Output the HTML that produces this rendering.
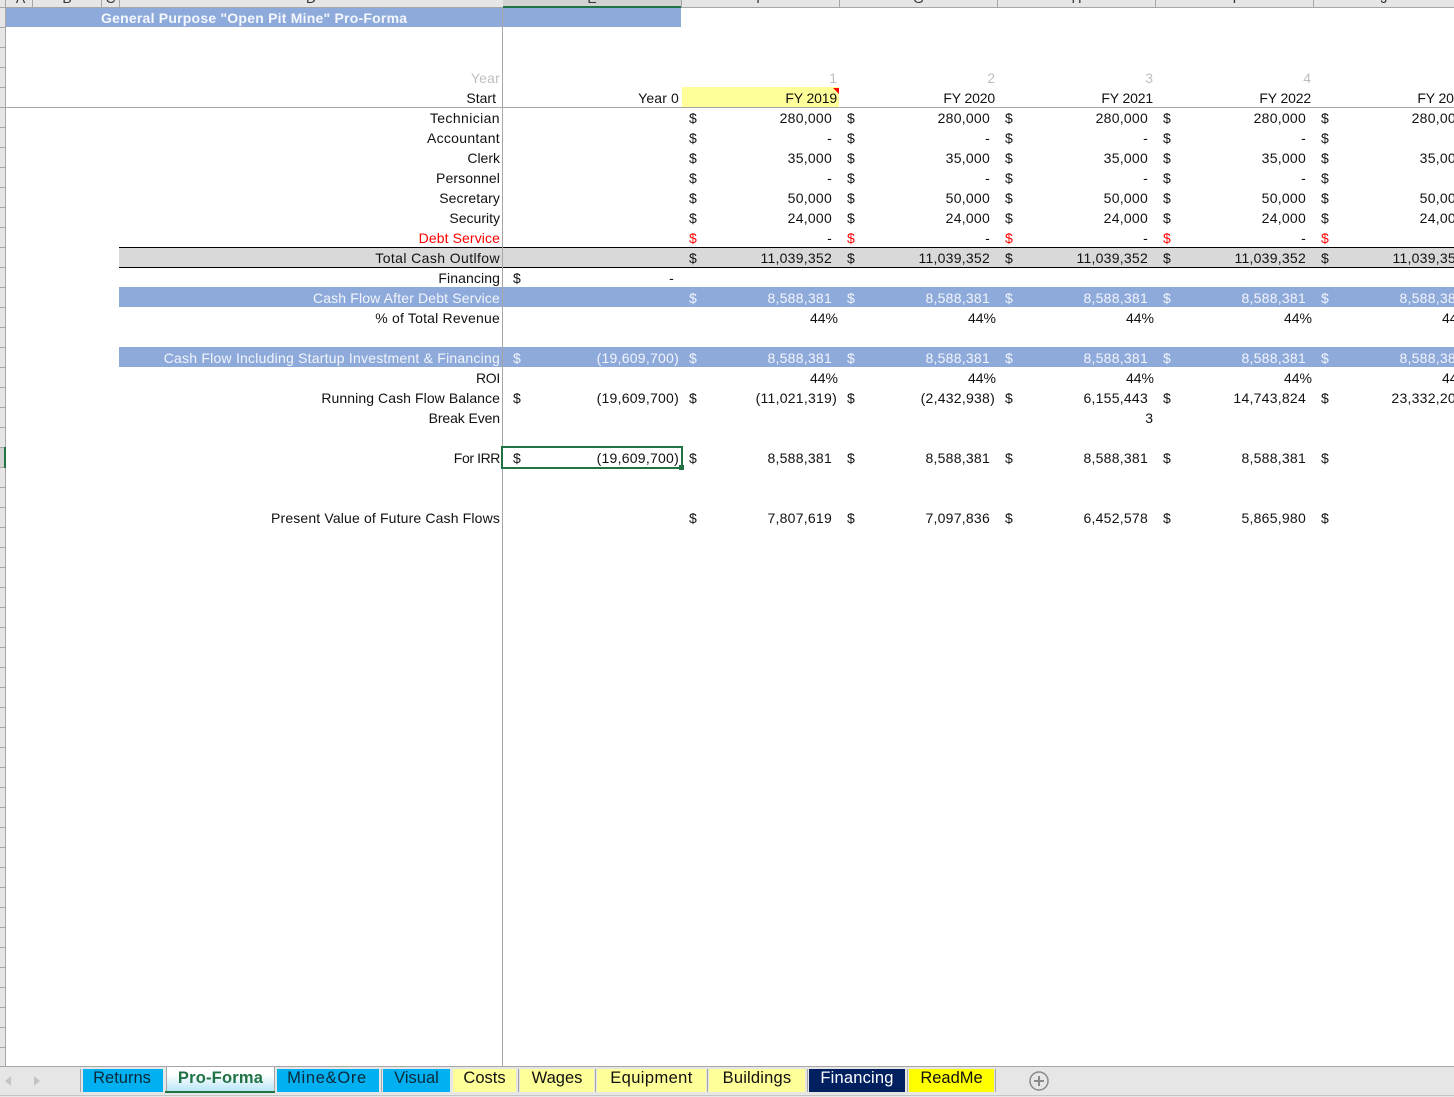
<!DOCTYPE html>
<html lang="en"><head><meta charset="utf-8"><title>Pro-Forma</title>
<style>
html,body{margin:0;padding:0;background:#fff}
#p{position:relative;width:1454px;height:1097px;overflow:hidden;background:#fff;font:14px/20px "Liberation Sans",sans-serif;color:#111}
#p div{position:absolute}
.r{left:0;width:1454px;height:20px}
.r span{position:absolute;top:0;white-space:nowrap}
.l,.z,.n1,.n2,.n3,.n4,.n5,.p1,.p2,.p3,.p4,.p5,.x{text-align:right;width:300px}
.l{left:100px;width:400px}.z{left:379px}.x{left:374px}
.z,.n1,.n2,.n3,.n4,.n5{letter-spacing:.25px}
.n1{left:532px}.n2{left:690px}.n3{left:848px}.n4{left:1006px}.n5{left:1164px}
.p1{left:538px}.p2{left:696px}.p3{left:854px}.p4{left:1012px}.p5{left:1170px}
.d0{left:513px}.d1{left:689px}.d2{left:847px}.d3{left:1005px}.d4{left:1163px}.d5{left:1321px}
.g{color:#bfbfbf}.w{color:#f2f5fb}.red{color:#f00}
.m{letter-spacing:.25px}.fy{letter-spacing:-.15px}
.t{top:1069px;height:23px;line-height:18px;font-size:16.5px;text-align:center}
.sep{top:1069px;width:1px;height:23px;background:#a6a6a6}
.hd{top:-11px;height:18px;line-height:18px;font-size:14px;text-align:center;color:#333}
.vh{top:0;width:1px;height:8px;background:#a6a6a6}
</style></head><body><div id="p">

<!-- column headers -->
<div style="left:0;top:0;width:1454px;height:7px;background:#e6e6e6;overflow:hidden">
<div class="hd" style="left:9px;width:23px">A</div>
<div class="hd" style="left:33px;width:68px">B</div>
<div class="hd" style="left:102px;width:17px">C</div>
<div class="hd" style="left:120px;width:382px">D</div>
<div style="left:503px;top:0;width:178px;height:7px;background:#d2d2d2"></div>
<div class="hd" style="left:503px;width:178px">E</div>
<div class="hd" style="left:682px;width:157px">F</div>
<div class="hd" style="left:840px;width:157px">G</div>
<div class="hd" style="left:998px;width:157px">H</div>
<div class="hd" style="left:1156px;width:157px">I</div>
<div class="hd" style="left:1314px;width:140px">J</div>
</div>
<div class="vh" style="left:5px"></div><div class="vh" style="left:32px"></div><div class="vh" style="left:101px"></div><div class="vh" style="left:119px"></div><div class="vh" style="left:681px"></div><div class="vh" style="left:839px"></div><div class="vh" style="left:997px"></div><div class="vh" style="left:1155px"></div><div class="vh" style="left:1313px"></div>
<div style="left:0;top:7px;width:1454px;height:1px;background:#a6a6a6"></div>
<div style="left:503px;top:6px;width:178px;height:2px;background:#217346"></div>

<!-- row headers -->
<div style="left:0;top:8px;width:5px;height:1058px;background:repeating-linear-gradient(to bottom,#e6e6e6 0,#e6e6e6 19px,#a9a9a9 19px,#a9a9a9 20px)"></div>
<div style="left:5px;top:8px;width:1px;height:1058px;background:#a6a6a6"></div>
<div style="left:0;top:448px;width:4px;height:19px;background:#d2d2d2"></div>
<div style="left:4px;top:447px;width:2px;height:21px;background:#217346"></div>

<!-- fills -->
<div style="left:6px;top:8px;width:675px;height:19px;background:#8eaadb"></div>
<div style="left:682px;top:87px;width:157px;height:20px;background:#ffff99"></div>
<div style="left:119px;top:248px;width:1335px;height:19px;background:#d9d9d9"></div>
<div style="left:119px;top:287px;width:1335px;height:20px;background:#8eaadb"></div>
<div style="left:119px;top:347px;width:1335px;height:20px;background:#8eaadb"></div>
<div style="left:119px;top:247px;width:1335px;height:1px;background:#000"></div>
<div style="left:119px;top:267px;width:1335px;height:1px;background:#000"></div>
<div style="left:6px;top:107px;width:1448px;height:1px;background:#a6a6a6"></div>
<div style="left:502px;top:8px;width:1px;height:1058px;background:#a6a6a6"></div>

<div style="left:101px;top:8px;height:20px;font-weight:bold;font-size:14px;letter-spacing:.22px;color:#f4f7fc;white-space:nowrap">General Purpose "Open Pit Mine" Pro-Forma</div>

<div class="r" style="top:68px"><span class="l g" style="letter-spacing:.2px">Year</span><span class="p1 g" style="left:537px">1</span><span class="p2 g" style="left:695px">2</span><span class="p3 g" style="left:853px">3</span><span class="p4 g" style="left:1011px">4</span></div>
<div class="r" style="top:88px"><span class="x" style="left:196px">Start</span><span class="z" style="letter-spacing:.15px">Year 0</span><span class="p1 fy" style="left:537px">FY 2019</span><span class="p2 fy" style="left:695px">FY 2020</span><span class="p3 fy" style="left:853px">FY 2021</span><span class="p4 fy" style="left:1011px">FY 2022</span><span class="p5 fy" style="left:1169px">FY 2023</span></div>
<div class="r" style="top:108px"><span class="l" style="letter-spacing:.4px">Technician</span><span class="d1">$</span><span class="n1">280,000</span><span class="d2">$</span><span class="n2">280,000</span><span class="d3">$</span><span class="n3">280,000</span><span class="d4">$</span><span class="n4">280,000</span><span class="d5">$</span><span class="n5">280,000</span></div>
<div class="r" style="top:128px"><span class="l" style="letter-spacing:.3px">Accountant</span><span class="d1">$</span><span class="n1">-</span><span class="d2">$</span><span class="n2">-</span><span class="d3">$</span><span class="n3">-</span><span class="d4">$</span><span class="n4">-</span><span class="d5">$</span></div>
<div class="r" style="top:148px"><span class="l">Clerk</span><span class="d1">$</span><span class="n1">35,000</span><span class="d2">$</span><span class="n2">35,000</span><span class="d3">$</span><span class="n3">35,000</span><span class="d4">$</span><span class="n4">35,000</span><span class="d5">$</span><span class="n5">35,000</span></div>
<div class="r" style="top:168px"><span class="l" style="letter-spacing:.1px">Personnel</span><span class="d1">$</span><span class="n1">-</span><span class="d2">$</span><span class="n2">-</span><span class="d3">$</span><span class="n3">-</span><span class="d4">$</span><span class="n4">-</span><span class="d5">$</span></div>
<div class="r" style="top:188px"><span class="l" style="letter-spacing:.1px">Secretary</span><span class="d1">$</span><span class="n1">50,000</span><span class="d2">$</span><span class="n2">50,000</span><span class="d3">$</span><span class="n3">50,000</span><span class="d4">$</span><span class="n4">50,000</span><span class="d5">$</span><span class="n5">50,000</span></div>
<div class="r" style="top:208px"><span class="l">Security</span><span class="d1">$</span><span class="n1">24,000</span><span class="d2">$</span><span class="n2">24,000</span><span class="d3">$</span><span class="n3">24,000</span><span class="d4">$</span><span class="n4">24,000</span><span class="d5">$</span><span class="n5">24,000</span></div>
<div class="r" style="top:228px"><span class="l red" style="letter-spacing:.1px">Debt Service</span><span class="d1 red">$</span><span class="n1">-</span><span class="d2 red">$</span><span class="n2">-</span><span class="d3 red">$</span><span class="n3">-</span><span class="d4 red">$</span><span class="n4">-</span><span class="d5 red">$</span></div>
<div class="r" style="top:248px"><span class="l" style="letter-spacing:.4px">Total Cash Outlfow</span><span class="d1">$</span><span class="n1">11,039,352</span><span class="d2">$</span><span class="n2">11,039,352</span><span class="d3">$</span><span class="n3">11,039,352</span><span class="d4">$</span><span class="n4">11,039,352</span><span class="d5">$</span><span class="n5">11,039,352</span></div>
<div class="r" style="top:268px"><span class="l" style="letter-spacing:.1px">Financing</span><span class="d0">$</span><span class="z" style="left:374px">-</span></div>
<div class="r w" style="top:288px"><span class="l" style="letter-spacing:.15px">Cash Flow After Debt Service</span><span class="d1">$</span><span class="n1">8,588,381</span><span class="d2">$</span><span class="n2">8,588,381</span><span class="d3">$</span><span class="n3">8,588,381</span><span class="d4">$</span><span class="n4">8,588,381</span><span class="d5">$</span><span class="n5">8,588,381</span></div>
<div class="r" style="top:308px"><span class="l" style="letter-spacing:.2px">% of Total Revenue</span><span class="p1">44%</span><span class="p2">44%</span><span class="p3">44%</span><span class="p4">44%</span><span class="p5">44%</span></div>
<div class="r w" style="top:348px"><span class="l" style="letter-spacing:.22px">Cash Flow Including Startup Investment &amp; Financing</span><span class="d0">$</span><span class="z">(19,609,700)</span><span class="d1">$</span><span class="n1">8,588,381</span><span class="d2">$</span><span class="n2">8,588,381</span><span class="d3">$</span><span class="n3">8,588,381</span><span class="d4">$</span><span class="n4">8,588,381</span><span class="d5">$</span><span class="n5">8,588,381</span></div>
<div class="r" style="top:368px"><span class="l" style="letter-spacing:-.3px">ROI</span><span class="p1">44%</span><span class="p2">44%</span><span class="p3">44%</span><span class="p4">44%</span><span class="p5">44%</span></div>
<div class="r" style="top:388px"><span class="l" style="letter-spacing:.08px">Running Cash Flow Balance</span><span class="d0">$</span><span class="z">(19,609,700)</span><span class="d1">$</span><span class="p1 m" style="left:537px">(11,021,319)</span><span class="d2">$</span><span class="p2 m" style="left:695px">(2,432,938)</span><span class="d3">$</span><span class="n3">6,155,443</span><span class="d4">$</span><span class="n4">14,743,824</span><span class="d5">$</span><span class="n5">23,332,205</span></div>
<div class="r" style="top:408px"><span class="l" style="letter-spacing:-.1px">Break Even</span><span class="p3" style="left:853px">3</span></div>
<div class="r" style="top:448px"><span class="l" style="letter-spacing:-.4px">For IRR</span><span class="d0">$</span><span class="z">(19,609,700)</span><span class="d1">$</span><span class="n1">8,588,381</span><span class="d2">$</span><span class="n2">8,588,381</span><span class="d3">$</span><span class="n3">8,588,381</span><span class="d4">$</span><span class="n4">8,588,381</span><span class="d5">$</span></div>
<div class="r" style="top:508px"><span class="l" style="letter-spacing:.15px">Present Value of Future Cash Flows</span><span class="d1">$</span><span class="n1">7,807,619</span><span class="d2">$</span><span class="n2">7,097,836</span><span class="d3">$</span><span class="n3">6,452,578</span><span class="d4">$</span><span class="n4">5,865,980</span><span class="d5">$</span></div>

<svg style="position:absolute;left:833px;top:88px" width="6" height="6"><path d="M0 0H6V6Z" fill="#f00"/></svg>

<!-- selection -->
<div style="left:501px;top:446px;width:178px;height:19px;border:2px solid #217346"></div>
<div style="left:679px;top:465px;width:5px;height:5px;background:#217346"></div>

<!-- tab bar -->
<div style="left:0;top:1066px;width:1454px;height:31px;background:#e6e6e6"></div>
<div style="left:0;top:1066px;width:1454px;height:1px;background:#a6a6a6"></div>
<div style="left:0;top:1095px;width:1454px;height:1px;background:#c6c6c6"></div>
<svg style="position:absolute;left:0;top:1070px" width="50" height="22"><path d="M11 6V16L5 11Z" fill="#c4c4c4"/><path d="M34 6V16L40 11Z" fill="#c4c4c4"/></svg>
<div class="sep" style="left:80px"></div>
<div class="t" style="left:83px;width:80px;background:#00b0f0;color:#0a2a3a;text-indent:-2px">Returns</div>
<div class="t" style="left:166px;top:1066px;width:107px;height:25px;line-height:23px;border:1px solid #a6a6a6;border-bottom:0;background:linear-gradient(#fff 30%,#b5e4f7);font-weight:bold;color:#217346;letter-spacing:.2px">Pro-Forma</div>
<div style="left:165px;top:1091px;width:110px;height:2px;background:#217346"></div>
<div class="t" style="left:277px;width:102px;background:#00b0f0;color:#0a2a3a;letter-spacing:.7px;text-indent:-2px">Mine&amp;Ore</div>
<div class="sep" style="left:381px"></div>
<div class="t" style="left:383px;width:67px;background:#00b0f0;color:#0a2a3a">Visual</div>
<div class="t" style="left:453px;width:63px;background:#ffff99;color:#111">Costs</div>
<div class="sep" style="left:518px"></div>
<div class="t" style="left:520px;width:74px;background:#ffff99;color:#111">Wages</div>
<div class="sep" style="left:595px"></div>
<div class="t" style="left:597px;width:109px;background:#ffff99;color:#111;letter-spacing:.4px">Equipment</div>
<div class="sep" style="left:707px"></div>
<div class="t" style="left:709px;width:96px;background:#ffff99;color:#111;letter-spacing:.2px">Buildings</div>
<div class="sep" style="left:807px"></div>
<div class="t" style="left:809px;width:96px;background:#002060;color:#fff;letter-spacing:.2px">Financing</div>
<div class="sep" style="left:907px"></div>
<div class="t" style="left:909px;width:85px;background:#ff0;color:#111">ReadMe</div>
<div class="sep" style="left:995px"></div>
<svg style="position:absolute;left:1028px;top:1070px" width="22" height="22"><circle cx="11" cy="11" r="9" fill="none" stroke="#8a8a8a" stroke-width="1.5"/><path d="M6 11H16M11 6V16" stroke="#8a8a8a" stroke-width="2" fill="none"/></svg>
</div></body></html>
